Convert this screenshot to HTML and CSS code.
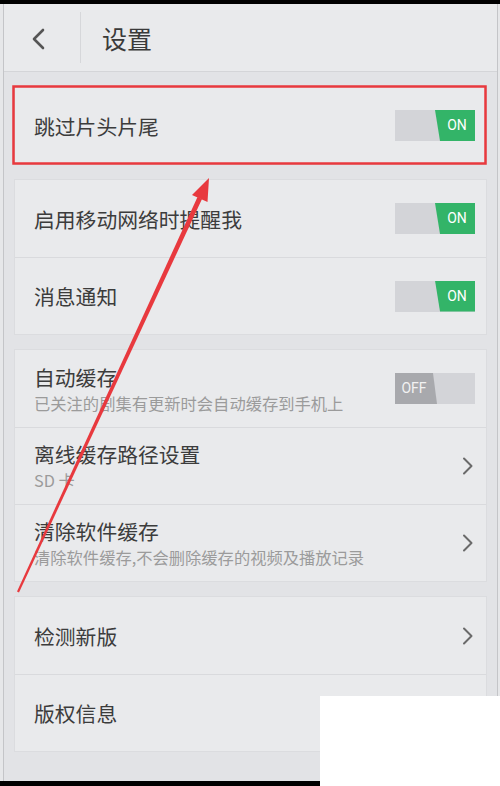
FILE: index.html
```html
<!DOCTYPE html>
<html lang="zh-CN">
<head>
    <meta charset="UTF-8">
    <meta name="viewport" content="width=device-width, initial-scale=1.0">
    <title>设置</title>
    <link rel="stylesheet" href="styles.css">
</head>
<body>
    <div class="status-bar"></div>
    <div class="frame">
        <div class="screen">
            <header class="top-bar">
                <div class="back-btn">
                    <svg width="14" height="22" viewBox="0 0 14 22"><path d="M12 2 L3 11 L12 20" fill="none" stroke="#555" stroke-width="2.6" stroke-linecap="round" stroke-linejoin="round"/></svg>
                </div>
                <div class="top-sep"></div>
                <h1 class="top-title">设置</h1>
            </header>

            <main class="settings">
                <section class="card">
                    <div class="row">
                        <span class="row-title">跳过片头片尾</span>
                        <span class="switch"><span class="switch-on">ON</span></span>
                    </div>
                </section>

                <section class="card">
                    <div class="row">
                        <span class="row-title">启用移动网络时提醒我</span>
                        <span class="switch"><span class="switch-on">ON</span></span>
                    </div>
                    <div class="row">
                        <span class="row-title">消息通知</span>
                        <span class="switch"><span class="switch-on">ON</span></span>
                    </div>
                </section>

                <section class="card">
                    <div class="row">
                        <div class="row-text">
                            <span class="row-title">自动缓存</span>
                            <span class="row-sub">已关注的剧集有更新时会自动缓存到手机上</span>
                        </div>
                        <span class="switch"><span class="switch-off">OFF</span></span>
                    </div>
                    <div class="row">
                        <div class="row-text">
                            <span class="row-title">离线缓存路径设置</span>
                            <span class="row-sub">SD 卡</span>
                        </div>
                        <svg class="chev" width="12" height="18" viewBox="0 0 12 18"><path d="M2 1.5 L9.5 9 L2 16.5" fill="none" stroke="#6a6a6a" stroke-width="2" stroke-linecap="round" stroke-linejoin="round"/></svg>
                    </div>
                    <div class="row">
                        <div class="row-text">
                            <span class="row-title">清除软件缓存</span>
                            <span class="row-sub">清除软件缓存,不会删除缓存的视频及播放记录</span>
                        </div>
                        <svg class="chev" width="12" height="18" viewBox="0 0 12 18"><path d="M2 1.5 L9.5 9 L2 16.5" fill="none" stroke="#6a6a6a" stroke-width="2" stroke-linecap="round" stroke-linejoin="round"/></svg>
                    </div>
                </section>

                <section class="card">
                    <div class="row">
                        <span class="row-title">检测新版</span>
                        <svg class="chev" width="12" height="18" viewBox="0 0 12 18"><path d="M2 1.5 L9.5 9 L2 16.5" fill="none" stroke="#6a6a6a" stroke-width="2" stroke-linecap="round" stroke-linejoin="round"/></svg>
                    </div>
                    <div class="row">
                        <span class="row-title">版权信息</span>
                    </div>
                </section>
            </main>
        </div>
    </div>
    <div class="nav-bar"></div>

    <div class="blank-patch"></div>

    <svg class="markup" width="500" height="786" viewBox="0 0 500 786">
        <rect x="13.5" y="86.5" width="472" height="77" fill="none" stroke="#e8393e" stroke-width="2.5"/>
        <polygon points="19,592.5 17,591.5 197.5,197 202,199" fill="#e8393e"/>
        <polygon points="209,178 207.5,202 192,195" fill="#e8393e"/>
    </svg>
</body>
</html>
```

FILE: styles.css
```css
*, *:before, *:after {
    margin: 0;
    padding: 0;
    box-sizing: border-box;
}
body {
    position: relative;
    width: 500px;
    height: 786px;
    overflow: hidden;
    background: #e6e7e9;
    font-family: "Noto Sans CJK SC", "Noto Sans", sans-serif;
    color: #444;
}
.status-bar {
    height: 4px;
    background: #000;
}
.frame {
    padding: 0 2px 0 3px;
    background: #e6e7e9;
}
.screen {
    height: 777px;
    background: #e2e3e6;
    border-left: 1px solid #c4c5c8;
    border-right: 1px solid #c4c5c8;
}
.nav-bar {
    height: 5px;
    background: #000;
}
.top-bar {
    display: flex;
    align-items: center;
    height: 68px;
    padding-top: 2px;
    background: #e9eaec;
    border-bottom: 1px solid #d4d5d8;
}
.back-btn {
    display: flex;
    align-items: center;
    justify-content: center;
    width: 76px;
    height: 100%;
    padding-right: 8px;
}
.top-sep {
    align-self: stretch;
    width: 1px;
    margin: 6px 0 8px;
    background: #d6d7da;
}
.top-title {
    padding-left: 21px;
    font-size: 25px;
    font-weight: normal;
    color: #3a3a3a;
    line-height: 1;
}
.settings {
    display: flex;
    flex-direction: column;
    gap: 14px;
    padding: 14px 10px;
}
.card {
    background: #e9eaec;
    border: 1px solid #dbdcdf;
}
.row {
    display: flex;
    align-items: center;
    justify-content: space-between;
    height: 77px;
    padding: 0 11px 0 19px;
}
.row + .row {
    border-top: 1px solid #d9dadd;
}
.row-text {
    display: flex;
    flex-direction: column;
    gap: 2px;
}
.row-title {
    font-size: 20.8px;
    line-height: 26px;
    color: #3c3c3c;
}
.row-sub {
    font-size: 16.3px;
    line-height: 22px;
    color: #9b9b9b;
}
.switch {
    display: flex;
    width: 80px;
    height: 31px;
    background: #d3d4d8;
}
.switch-on {
    width: 40px;
    margin-left: auto;
    padding-left: 4px;
    background: #33b468;
    clip-path: polygon(0 0, 100% 0, 100% 100%, 5px 100%);
    color: #fff;
    font-family: Roboto, "Noto Sans", sans-serif;
    font-size: 14px;
    line-height: 31px;
    text-align: center;
}
.switch-off {
    width: 42px;
    padding-right: 4px;
    background: #a8a9ad;
    clip-path: polygon(0 0, 38px 0, 100% 100%, 0 100%);
    color: #f2f2f2;
    font-family: Roboto, "Noto Sans", sans-serif;
    font-size: 14px;
    line-height: 31px;
    text-align: center;
}
.chev {
    margin-right: 1px;
}
.blank-patch {
    position: absolute;
    left: 320px;
    top: 696px;
    width: 180px;
    height: 90px;
    background: #fff;
}
.markup {
    position: absolute;
    left: 0;
    top: 0;
    pointer-events: none;
}
```
